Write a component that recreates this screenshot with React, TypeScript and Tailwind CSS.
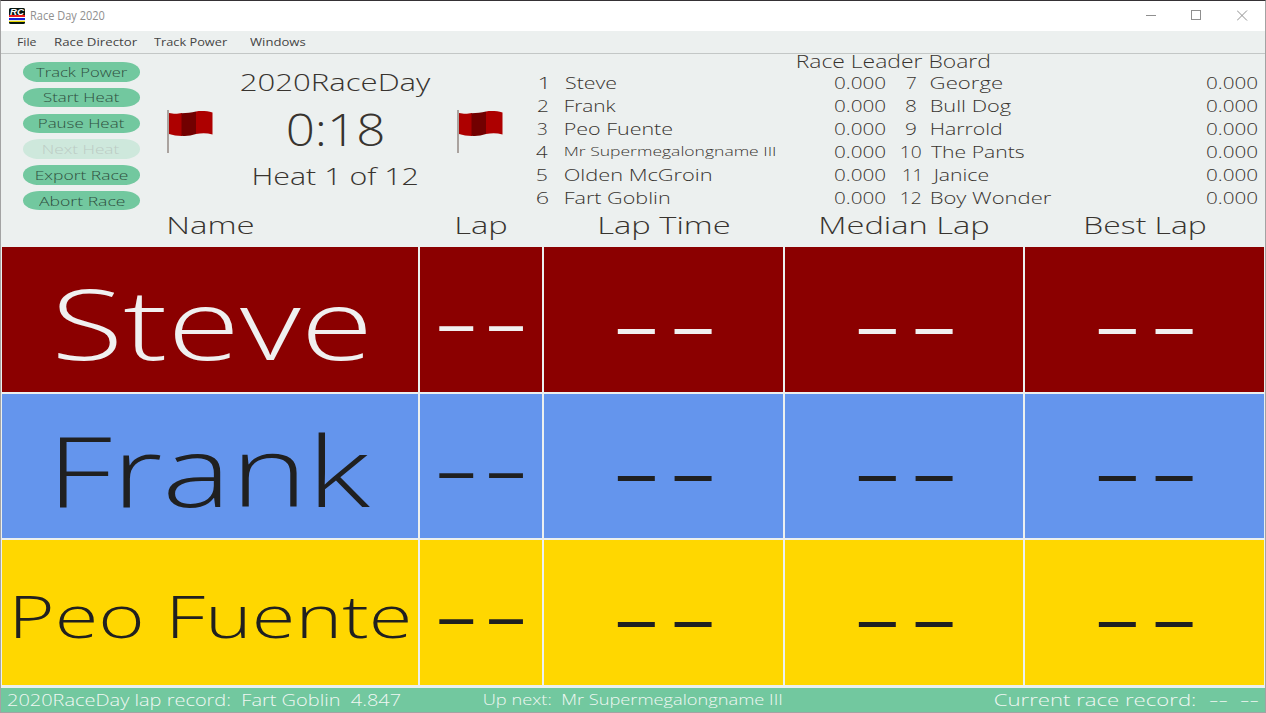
import { useLayoutEffect, useRef } from "react";
import clsx from "clsx";

/** Stretches one line of text so that its ink fills the width of its box. */
function Fit({ text, className }: { text: string; className: string }) {
  const box = useRef<HTMLDivElement>(null);
  const line = useRef<HTMLSpanElement>(null);

  useLayoutEffect(() => {
    const outer = box.current;
    const inner = line.current;
    const ctx = document.createElement("canvas").getContext("2d");
    if (!outer || !inner || !ctx) return;
    const s = getComputedStyle(inner);
    ctx.font = `${s.fontWeight} ${s.fontSize} ${s.fontFamily}`;
    const spacing = parseFloat(s.letterSpacing) || 0;
    const m = ctx.measureText(text);
    const left = -m.actualBoundingBoxLeft;
    const ink = m.actualBoundingBoxRight - left + spacing * (text.length - 1);
    const scale = outer.getBoundingClientRect().width / ink;
    inner.style.transform = `translateX(${-left * scale}px) scaleX(${scale})`;
  }, [text]);

  return (
    <div ref={box} className={clsx("shrink-0 leading-none", className)}>
      <span ref={line} className="block w-max origin-left whitespace-pre">
        {text}
      </span>
    </div>
  );
}

function Flag() {
  return (
    <svg width="46" height="43" viewBox="0 0 46 43" className="mt-[5px] shrink-0">
      <rect x="0" y="0" width="2" height="43" fill="#aaa39f" />
      <path d="M2 3 C7 4 10 4 15 3 L15 26 C10 26 6 25 2 24Z" fill="#ad0000" />
      <path d="M14.500 3.200 C20 3 24 2.500 29 1.500 L29 24 C24 25.500 19 26.500 14.500 25.700Z" fill="#720000" />
      <path d="M29 1.500 C34 .8 40 1 45.500 2.500 L45.500 24.500 C40 23 35 23 29 24Z" fill="#ad0000" />
    </svg>
  );
}

function AppIcon() {
  return (
    <svg width="16" height="16" viewBox="0 0 16 16" className="-mt-px shrink-0">
      <rect width="16" height="16" rx="1.500" fill="#06160f" />
      <text x="1" y="6.500" fontSize="8.500" fontWeight="700" fontStyle="italic" fill="#fff" textLength="14" lengthAdjust="spacingAndGlyphs" fontFamily="Liberation Sans, sans-serif">RC</text>
      <rect y="7" width="16" height="2" fill="#ee1c1c" />
      <rect y="9" width="16" height="1" fill="#fff" />
      <rect y="10" width="16" height="2" fill="#1420d8" />
      <rect y="12" width="16" height="1" fill="#e9e9c8" />
      <rect y="13" width="16" height="1" fill="#e8d800" />
    </svg>
  );
}

const menus = [
  { text: "File", box: "ml-[15.5px] w-[20px]" },
  { text: "Race Director", box: "ml-[17.5px] w-[83px]" },
  { text: "Track Power", box: "ml-[17px] w-[73px]" },
  { text: "Windows", box: "ml-[23px] w-[56px]" },
];

const actions = [
  { text: "Track Power", box: "w-[91px]" },
  { text: "Start Heat", box: "w-[77px]" },
  { text: "Pause Heat", box: "w-[86px]" },
  { text: "Next Heat", box: "w-[77px]", disabled: true },
  { text: "Export Race", box: "w-[92px]" },
  { text: "Abort Race", box: "w-[86px]" },
];

const leaders = [
  [
    { rank: "1", rankBox: "w-[7px]", name: "Steve", box: "w-[51px] text-[16px]" },
    { rank: "2", rankBox: "w-[11px]", name: "Frank", box: "w-[51px] text-[16px]" },
    { rank: "3", rankBox: "w-[10px]", name: "Peo Fuente", box: "w-[107px] text-[16px]" },
    { rank: "4", rankBox: "w-[12px]", name: "Mr Supermegalongname III", box: "-ml-px w-[211px] text-[13.5px]" },
    { rank: "5", rankBox: "w-[10px]", name: "Olden McGroin", box: "w-[147px] text-[16px]" },
    { rank: "6", rankBox: "w-[11px]", name: "Fart Goblin", box: "w-[105px] text-[16px]" },
  ],
  [
    { rank: "7", rankBox: "w-[10px]", name: "George", box: "w-[71px] text-[16px]" },
    { rank: "8", rankBox: "w-[11px]", name: "Bull Dog", box: "w-[81px] text-[16px]" },
    { rank: "9", rankBox: "w-[11px]", name: "Harrold", box: "w-[71px] text-[16px]" },
    { rank: "10", rankBox: "w-[20px]", name: "The Pants", box: "w-[93px] text-[16px]" },
    { rank: "11", rankBox: "w-[16px]", name: "Janice", box: "w-[57px] text-[16px]" },
    { rank: "12", rankBox: "w-[20px]", name: "Boy Wonder", box: "w-[120px] text-[16px]" },
  ],
];

const headings = [
  { text: "Name", box: "w-[84px]" },
  { text: "Lap", box: "w-[49px]" },
  { text: "Lap Time", box: "w-[129px]" },
  { text: "Median Lap", box: "w-[167px]" },
  { text: "Best Lap", box: "w-[119px]" },
];

const lanes = [
  { name: "Steve", box: "ml-[3px] w-[308px] text-[97px]", lane: "bg-[#8b0000]", ink: "text-[#f0f0f0]" },
  { name: "Frank", box: "ml-[9px] w-[311px] text-[97px]", lane: "bg-[#6495ed]", ink: "text-[#202020]" },
  { name: "Peo Fuente", box: "ml-[3px] w-[394px] text-[59px]", lane: "bg-[#ffd700]", ink: "text-[#202020]" },
];

const columns = "grid grid-cols-[416px_122px_239px_238px_239px] gap-x-[2px] pl-px";

export default function App() {
  return (
    <div className="flex h-[713px] w-[1266px] flex-col overflow-hidden border border-[#a3a3a3] border-t-[#353135] bg-[#ecf0ef] font-['Open_Sans',sans-serif] font-light text-[#38342f]">
      <header className="flex h-[30px] shrink-0 items-center bg-white pl-[8px] text-[#8f8f8f]">
        <AppIcon />
        <Fit text="Race Day 2020" className="ml-[6px] w-[74px] text-[12px] font-normal" />
        <div className="-mt-px ml-auto mr-[17px] flex items-center gap-[35px]">
          <svg width="10" height="11" viewBox="0 0 10 11" fill="none" stroke="#8f8f8f">
            <path d="M0 5.500H10" />
          </svg>
          <svg width="11" height="11" viewBox="0 0 11 11" fill="none" stroke="#8f8f8f">
            <rect x=".5" y=".5" width="9" height="9" />
          </svg>
          <svg width="11" height="11" viewBox="0 0 11 11" fill="none" stroke="#8f8f8f">
            <path d="M0 .5L10 10.500M10 .5L0 10.500" />
          </svg>
        </div>
      </header>

      <nav className="flex h-[23px] shrink-0 items-center border-b border-[#c3c7c6] text-[10px] font-normal text-[#444]">
        {menus.map((m) => (
          <Fit key={m.text} text={m.text} className={m.box} />
        ))}
      </nav>

      <section className="flex h-[158px] shrink-0">
        <div className="ml-[22px] flex w-[117px] flex-col gap-[6.3px] pt-[8px]">
          {actions.map((a) => (
            <button
              key={a.text}
              disabled={a.disabled}
              className={clsx(
                "flex h-[19.5px] shrink-0 items-center justify-center rounded-[17px/50%] pt-px text-[13.3px]",
                a.disabled ? "bg-[#cee8dc] text-[#bccbc4]" : "bg-[#72c89f] text-[#2f4f40]",
              )}
            >
              <Fit text={a.text} className={a.box} />
            </button>
          ))}
        </div>

        <div className="ml-[27px] flex w-[336px] flex-col items-center pt-[8px]">
          <div className="flex h-10 items-center pl-[2px]">
            <Fit text="2020RaceDay" className="w-[190px] text-[23px]" />
          </div>
          <div className="flex h-[53px] w-full items-center justify-between">
            <Flag />
            <Fit text="0:18" className="mt-px w-[95px] text-[44px]" />
            <Flag />
          </div>
          <div className="flex h-[41px] items-center pl-[2px]">
            <Fit text="Heat 1 of 12" className="w-[164px] text-[24px]" />
          </div>
        </div>

        <div className="ml-[33px] w-[722px]">
          <div className="flex h-[15px] items-center">
            <Fit text="Race Leader Board" className="ml-[261px] mt-px w-[192px] text-[17.5px]" />
          </div>
          <div className="mt-[2.5px] flex">
            {leaders.map((half, i) => (
              <div key={i} className={i === 0 ? "w-[350px]" : "ml-[13px] w-[359px]"}>
                {half.map((r) => (
                  <div key={r.rank} className="flex h-[23px] items-center">
                    <div className={clsx("flex justify-center", i === 0 ? "w-[12px]" : "w-[23px]")}>
                      <Fit text={r.rank} className={clsx("-mt-px text-[17px]", r.rankBox)} />
                    </div>
                    <Fit text={r.name} className={clsx(i === 0 ? "ml-[17px]" : "ml-[9px]", r.box)} />
                    <div className="ml-auto">
                      <Fit text="0.000" className="w-[52px] text-[16px]" />
                    </div>
                  </div>
                ))}
              </div>
            ))}
          </div>
        </div>
      </section>

      <div className={clsx(columns, "h-[35px] shrink-0 pt-px")}>
        {headings.map((h) => (
          <div key={h.text} className="flex h-[23px] items-center justify-center pl-px">
            <Fit text={h.text} className={clsx("text-[24px]", h.box)} />
          </div>
        ))}
      </div>

      <main className="flex shrink-0 flex-col gap-[2px]">
        {lanes.map((l, row) => (
          <div key={l.name} className={clsx(columns, row === 1 ? "h-[144px]" : "h-[145px]", l.ink)}>
            <div className={clsx("flex items-center justify-center pt-[6px]", l.lane)}>
              <Fit text={l.name} className={l.box} />
            </div>
            <div className={clsx("flex items-center justify-center pt-[5px]", l.lane)}>
              <Fit text="--" className="w-[87px] text-[64px] font-normal tracking-[0.035em]" />
            </div>
            {[0, 1, 2].map((c) => (
              <div key={c} className={clsx("flex items-center justify-center pt-[7px] pl-px", l.lane)}>
                <Fit text="--" className="w-[96px] text-[70px] font-normal tracking-[0.05em]" />
              </div>
            ))}
          </div>
        ))}
      </main>

      <footer className="mt-[3px] flex h-[24px] shrink-0 items-center bg-[#72c89f] text-[#f0f7f3]">
        <Fit text="2020RaceDay lap record:  Fart Goblin  4.847" className="ml-[6px] w-[394px] text-[16px]" />
        <Fit text="Up next:  Mr Supermegalongname III" className="ml-[83px] w-[298px] text-[14.5px]" />
        <div className="-mt-px ml-auto mr-[7px] flex text-[17px]">
          <Fit text="Current race record:" className="w-[200px]" />
          <Fit text="--" className="ml-[14px] w-[18px]" />
          <Fit text="--" className="ml-[13px] w-[18px]" />
        </div>
      </footer>
    </div>
  );
}
